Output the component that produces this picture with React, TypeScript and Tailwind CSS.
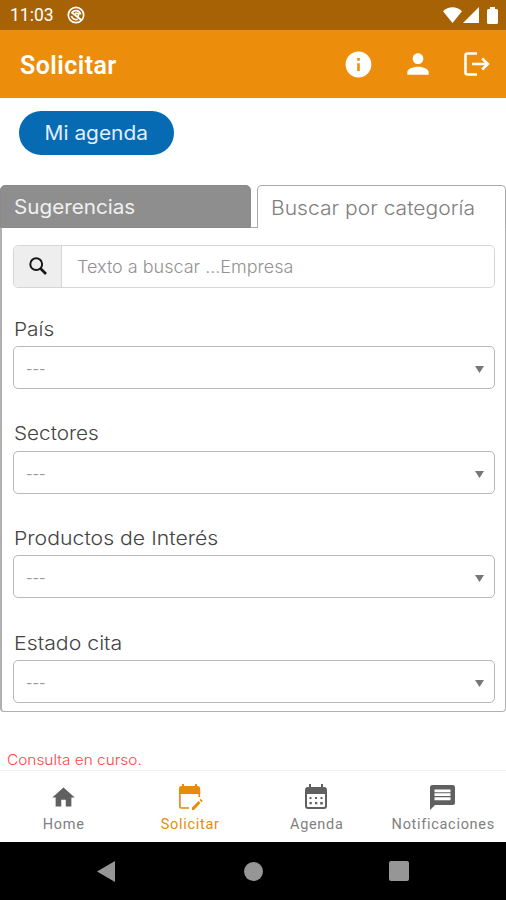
import type { ReactNode } from "react";
import { MdHome, MdInfo, MdPerson } from "react-icons/md";

const FILTERS = [
  { label: "País", stretch: "scale-x-[1.1]" },
  { label: "Sectores", stretch: "scale-x-[1.09]" },
  { label: "Productos de Interés", stretch: "scale-x-[1.118]" },
  { label: "Estado cita", stretch: "scale-x-[1.12]" },
];

function StatusBar() {
  return (
    <div className="flex h-[30px] items-center justify-between bg-[#a66205] pr-2 pl-[10px] font-[Roboto] text-white">
      <div className="flex items-center gap-[13px] pt-[2px]">
        <span className="w-11 text-[17.5px] leading-none">11:03</span>
        <svg width="18" height="18" viewBox="0 0 18 18" fill="none" stroke="currentColor" className="-mt-[2px]">
          <circle cx="9" cy="9" r="7.7" strokeWidth="1.7" />
          <path d="M4.8 7.2A4.7 4.7 0 0 1 13.6 8.5M4.5 9.8A4.7 4.7 0 0 0 10.8 13.3" strokeWidth="1.7" />
          <path d="M4.5 6.2L14.3 14M8.2 7.2l3.5.5-.7 3" strokeWidth="1.8" />
        </svg>
      </div>
      <div className="flex items-center">
        <svg width="19" height="16" viewBox="0 0 19 16" fill="currentColor">
          <path d="M0 4.2C5.2-1 13.8-1 19 4.2L9.5 16z" />
        </svg>
        <svg width="16" height="16" viewBox="0 0 16 16" fill="currentColor" className="ml-px">
          <path d="M16 0v16H0z" />
        </svg>
        <svg width="11" height="17" viewBox="0 0 11 17" fill="currentColor" className="ml-2">
          <path d="M3 0h5v2h1.5Q11 2 11 3.5v12Q11 17 9.5 17h-8Q0 17 0 15.5v-12Q0 2 1.5 2H3z" />
        </svg>
      </div>
    </div>
  );
}

function Header() {
  return (
    <header className="flex h-[68px] items-center justify-between bg-[#ec8e0b] pr-4 pl-5 font-[Roboto] text-white">
      <h1 className="pt-[3px] text-[25px] leading-none font-semibold tracking-[0.45px]">Solicitar</h1>
      <div className="flex items-center">
        <MdInfo className="size-[31px]" />
        <MdPerson className="ml-[28px] size-[32px]" />
        <svg
          width="26"
          height="24"
          viewBox="0 0 26 24"
          fill="none"
          stroke="currentColor"
          strokeWidth="2.6"
          className="ml-[30px]"
        >
          <path d="M13 1.5H3.5Q1.5 1.5 1.5 3.5v17q0 2 2 2H13M8 12h15" />
          <path d="M18.2 6.5L23.8 12l-5.6 5.5" />
        </svg>
      </div>
    </header>
  );
}

function Tabs() {
  return (
    <div className="flex h-[43px] text-[19.5px]">
      <div className="flex h-full w-[251px] items-center rounded-t-[5px] border border-[#8a8a8a] bg-[#8e8e8e] pt-[3px] pl-[13px] text-[#f0f0f0]">
        <span className="origin-left scale-x-[1.06]">Sugerencias</span>
      </div>
      <div className="w-[6px] border-b border-[#a8a8a8]" />
      <div className="flex h-full flex-1 items-center rounded-t-[5px] border border-b-0 border-[#a8a8a8] pt-[3px] pl-[13px] text-[#808080]">
        <span className="origin-left scale-x-[1.08] font-light">Buscar por categoría</span>
      </div>
    </div>
  );
}

function SearchField() {
  return (
    <div className="flex h-[43px] w-[482px] overflow-hidden rounded-[5px] border-[1.5px] border-[#d6d6d6]">
      <div className="flex w-12 items-center justify-center border-r border-[#d6d6d6] bg-[#eeeeee]">
        <svg width="18" height="18" viewBox="0 0 18 18" fill="none" stroke="#171717" className="-mt-[2px]">
          <circle cx="7.2" cy="7.2" r="5.9" strokeWidth="2" />
          <path d="M11.5 11.5L17 17" strokeWidth="2.6" />
        </svg>
      </div>
      <div className="flex items-center pt-px pl-[15px] text-[17.5px] text-[#929292]">
        <span className="origin-left scale-x-[1.028] font-light">Texto a buscar ...Empresa</span>
      </div>
    </div>
  );
}

function SelectField({ label, stretch }: { label: string; stretch: string }) {
  return (
    <div className="h-[104.6px]">
      <div className="flex h-[31px] items-center pt-[3px] pl-px text-[19px] text-[#444]">
        <span className={`origin-left font-light ${stretch}`}>{label}</span>
      </div>
      <div className="mt-[2px] flex h-[43px] w-[482px] items-center justify-between rounded-[5px] border border-[#b8b8b8] pr-[10px] pl-[12px] text-[#999]">
        <span className="pt-[2px] text-[14px] tracking-[0.1px]">---</span>
        <svg width="9" height="7" viewBox="0 0 9 7" fill="#777" className="mt-[4px]">
          <path d="M0 0h9L4.5 7z" />
        </svg>
      </div>
    </div>
  );
}

function NavItem({ label, active, children }: { label: string; active?: boolean; children: ReactNode }) {
  return (
    <div className={active ? "flex flex-1 flex-col items-center text-[#e88b0c]" : "flex flex-1 flex-col items-center text-[#606060]"}>
      <div className="flex h-[30px] items-center justify-center">{children}</div>
      <span className={active ? "mt-[2px] pl-px text-[14.5px] tracking-[0.7px]" : "mt-[2px] pl-px text-[14.5px] tracking-[0.7px] text-[#808080]"}>
        {label}
      </span>
    </div>
  );
}

function BottomNav() {
  return (
    <nav className="flex h-[72px] border-t border-[#f2f2ef] bg-white pt-[11px] font-[Roboto]">
      <NavItem label="Home">
        <MdHome className="size-[27px]" />
      </NavItem>
      <NavItem label="Solicitar" active>
        <svg width="26" height="27" viewBox="0 0 26 27" fill="none" stroke="currentColor" strokeWidth="1.7">
          <path d="M2.9 8v14.5q0 1.5 1.5 1.5H12M22.3 8v5" />
          <path d="M2 4.5Q2 2 4 2h1V0h2v2h11V0h2v2h1q2.2 0 2.2 2.5V10H2z" fill="currentColor" stroke="none" />
          <path d="M15 26v-2.5l6.5-6.5 2 2L17 26zM22.5 16l1.2-1.2 2.2 2.2-1.2 1.3z" fill="currentColor" stroke="none" />
        </svg>
      </NavItem>
      <NavItem label="Agenda">
        <svg width="22" height="26" viewBox="0 0 22 26" fill="currentColor">
          <path
            fillRule="evenodd"
            d="M3 3h1V0h2v3h10V0h2v3h1q3 0 3 3v16q0 3-3 3H3q-3 0-3-3V6q0-3 3-3zM2 10v12q0 1 1 1h16q1 0 1-1V10z"
          />
          <path d="M4.5 13h2v2h-2zM10 13h2v2h-2zM15.5 13h2v2h-2zM4.5 18h2.3v2.3H4.5zM10 18h2.3v2.3H10zM15.2 18h2.6v2.6h-2.6z" />
        </svg>
      </NavItem>
      <NavItem label="Notificaciones">
        <svg width="25" height="25" viewBox="0 0 25 25" fill="currentColor">
          <path d="M2.5 0h20Q25 0 25 2.5v15q0 2.5-2.5 2.5H5l-5 5V2.5Q0 0 2.5 0z" />
          <path d="M4.5 4.5h16v2.8h-16zM4.5 8.3h16V11h-16zM4.5 12.3h16v3h-16z" fill="#fff" />
        </svg>
      </NavItem>
    </nav>
  );
}

function SystemBar() {
  return (
    <div className="flex h-[58px] items-center justify-between bg-black px-[97px]">
      <svg width="18" height="21" viewBox="0 0 18 21" fill="#969696">
        <path d="M18 0v21L0 10.5z" />
      </svg>
      <div className="ml-[3px] size-[19px] rounded-full bg-[#969696]" />
      <div className="size-[20px] rounded-[2px] bg-[#969696]" />
    </div>
  );
}

export default function App() {
  return (
    <div className="flex h-[900px] w-[506px] flex-col overflow-hidden bg-white font-[Inter,sans-serif] whitespace-nowrap">
      <StatusBar />
      <Header />
      <div className="h-[87px] pt-[13px] pl-[19px]">
        <button className="flex h-[44px] w-[155px] items-center justify-center rounded-full bg-[#066bb3] pt-[2px] text-[19.5px] text-[#e3eff9]">
          <span className="scale-x-[1.07]">Mi agenda</span>
        </button>
      </div>
      <Tabs />
      <section className="h-[484px] rounded-b-[4px] border border-t-0 border-l-2 border-[#b0b0b0] pt-[17px] pl-[11px]">
        <SearchField />
        <div className="pt-[25px]">
          {FILTERS.map((filter) => (
            <SelectField key={filter.label} {...filter} />
          ))}
        </div>
      </section>
      <div className="flex-1 pt-[37px] pl-[7px] text-[14px] text-[#ff4545]">
        <span className="inline-block origin-left scale-x-[1.1] font-light">Consulta en curso.</span>
      </div>
      <BottomNav />
      <SystemBar />
    </div>
  );
}
